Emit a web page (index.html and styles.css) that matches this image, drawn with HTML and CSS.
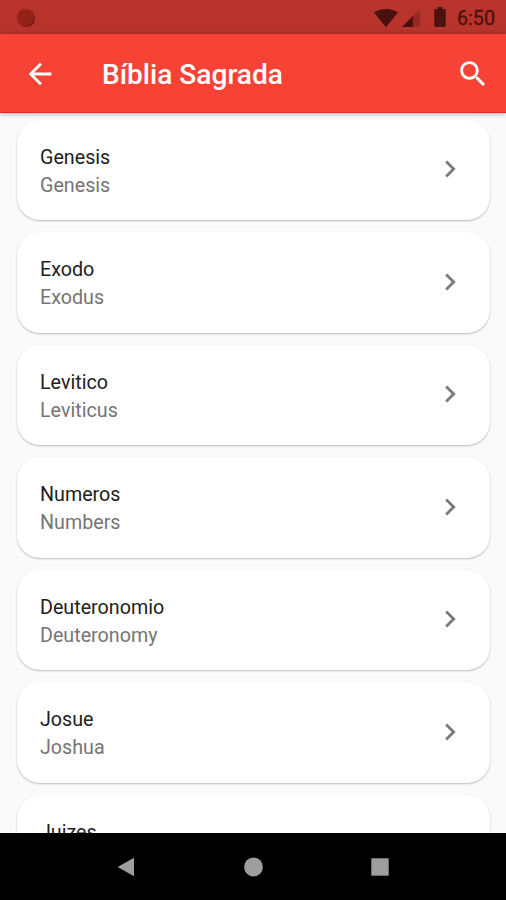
FILE: index.html
```html
<!DOCTYPE html>
<html lang="pt">
<head>
    <meta charset="UTF-8">
    <meta name="viewport" content="width=device-width, initial-scale=1.0">
    <title>Bíblia Sagrada</title>
    <link rel="stylesheet" href="styles.css">
</head>
<body>
    <svg class="sprite">
        <symbol id="chevron" viewBox="0 0 24 24">
            <path d="M10 6L8.59 7.41 13.17 12l-4.58 4.59L10 18l6-6z"/>
        </symbol>
    </svg>
    <div class="status-bar">
        <span class="record"></span>
        <div class="status-icons">
            <svg class="wifi" width="26" height="20" viewBox="0 0 26 20">
                <path d="M1 4.600C4.200 2.200 8.200 1 13 1s8.800 1.200 12 3.600L13 19.300z"/>
            </svg>
            <svg class="signal" width="18" height="18" viewBox="0 0 19 19">
                <path d="M0 19L19 0v19z" opacity="0.3"/>
                <path d="M0 19L11.500 7.500V19z"/>
            </svg>
            <svg class="battery" width="12" height="20" viewBox="0 0 12 21">
                <path d="M3.500 0h5v2.200h2.300c.7 0 1.200.5 1.200 1.200v16.200c0 .8-.6 1.400-1.400 1.400H1.400C.6 21 0 20.400 0 19.600V3.400c0-.7.5-1.200 1.200-1.200h2.300z"/>
            </svg>
        </div>
        <span class="time">6:50</span>
    </div>
    <header class="app-bar">
        <svg class="back" width="34" height="34" viewBox="0 0 24 24">
            <path d="M20 11H7.830l5.590-5.590L12 4l-8 8 8 8 1.410-1.410L7.830 13H20v-2z"/>
        </svg>
        <h1>Bíblia Sagrada</h1>
        <svg class="search" width="34" height="34" viewBox="0 0 24 24">
            <path d="M15.500 14h-.79l-.28-.27C15.410 12.590 16 11.110 16 9.500 16 5.910 13.090 3 9.500 3S3 5.910 3 9.500 5.910 16 9.500 16c1.610 0 3.090-.59 4.230-1.570l.27.28v.79l5 4.990L20.490 19l-4.990-5zm-6 0C7.010 14 5 11.990 5 9.500S7.010 5 9.500 5 14 7.010 14 9.500 11.990 14 9.500 14z"/>
        </svg>
    </header>
    <main class="book-list">
        <div class="card">
            <div class="names"><p class="title">Genesis</p><p class="subtitle">Genesis</p></div>
            <svg class="chevron"><use href="#chevron"/></svg>
        </div>
        <div class="card">
            <div class="names"><p class="title">Exodo</p><p class="subtitle">Exodus</p></div>
            <svg class="chevron"><use href="#chevron"/></svg>
        </div>
        <div class="card">
            <div class="names"><p class="title">Levitico</p><p class="subtitle">Leviticus</p></div>
            <svg class="chevron"><use href="#chevron"/></svg>
        </div>
        <div class="card">
            <div class="names"><p class="title">Numeros</p><p class="subtitle">Numbers</p></div>
            <svg class="chevron"><use href="#chevron"/></svg>
        </div>
        <div class="card">
            <div class="names"><p class="title">Deuteronomio</p><p class="subtitle">Deuteronomy</p></div>
            <svg class="chevron"><use href="#chevron"/></svg>
        </div>
        <div class="card">
            <div class="names"><p class="title">Josue</p><p class="subtitle">Joshua</p></div>
            <svg class="chevron"><use href="#chevron"/></svg>
        </div>
        <div class="card">
            <div class="names"><p class="title">Juizes</p></div>
        </div>
    </main>
    <nav class="nav-bar">
        <svg width="20" height="20" viewBox="0 0 20 20"><path d="M1.700 10L18 .8v18.400z"/></svg>
        <svg width="20" height="20" viewBox="0 0 20 20"><circle cx="10.500" cy="10" r="9.400"/></svg>
        <svg width="20" height="20" viewBox="0 0 20 20"><rect x="1.300" y="1.300" width="17.400" height="17.400"/></svg>
    </nav>
</body>
</html>
```

FILE: styles.css
```css
* {
    box-sizing: border-box;
}
body {
    font-family: Roboto, sans-serif;
    background-color: #fafafa;
    margin: 0;
    height: 900px;
    display: flex;
    flex-direction: column;
    overflow: hidden;
}
h1, p {
    margin: 0;
}
svg {
    display: block;
    flex: none;
}
.sprite {
    display: none;
}
.status-bar {
    height: 34px;
    flex: none;
    display: flex;
    align-items: center;
    padding: 0 11px 0 17px;
    background: #b7332b;
    color: #4a110d;
}
.record {
    width: 17px;
    height: 17px;
    border-radius: 50%;
    background: #942219;
    box-shadow: 1px 1px 1px #6e1812;
}
.status-icons {
    display: flex;
    margin-left: auto;
    fill: #4a110d;
}
.wifi {
    margin-top: 1px;
}
.signal {
    margin: 2px 14px 0 3px;
}
.time {
    font-size: 19.7px;
    margin-left: 11px;
    padding-top: 3px;
    -webkit-text-stroke: 0.3px #4a110d;
}
.app-bar {
    height: 79px;
    flex: none;
    display: flex;
    align-items: center;
    padding: 2px 16px 0 23px;
    background: #f74336;
    border-bottom: 1px solid #df2c1d;
    box-shadow: 0 1px 5px rgba(0, 0, 0, 0.3);
    position: relative;
    z-index: 1;
    color: #fff;
    fill: #fff;
}
h1 {
    font-size: 28.1px;
    font-weight: 500;
    margin-left: 45px;
}
.search {
    margin-left: auto;
}
.book-list {
    flex: 1;
    min-height: 0;
    overflow: hidden;
    padding: 6.500px 16px 0 17px;
}
.card {
    height: 100.500px;
    margin-bottom: 12px;
    padding: 0 23px;
    display: flex;
    justify-content: space-between;
    background: #fff;
    border-radius: 23px;
    box-shadow: 0 1px 2px rgba(0, 0, 0, 0.26);
}
.names {
    padding-top: 24px;
    font-size: 19.7px;
    line-height: 28.200px;
}
.title {
    color: #212121;
}
.subtitle {
    color: #757575;
}
.chevron {
    width: 34px;
    height: 34px;
    margin-top: 32.500px;
    fill: #7b7b7b;
}
.nav-bar {
    height: 67px;
    flex: none;
    display: flex;
    align-items: center;
    justify-content: space-between;
    padding: 0 116px;
    background: #000;
    fill: #9e9e9e;
}
```
